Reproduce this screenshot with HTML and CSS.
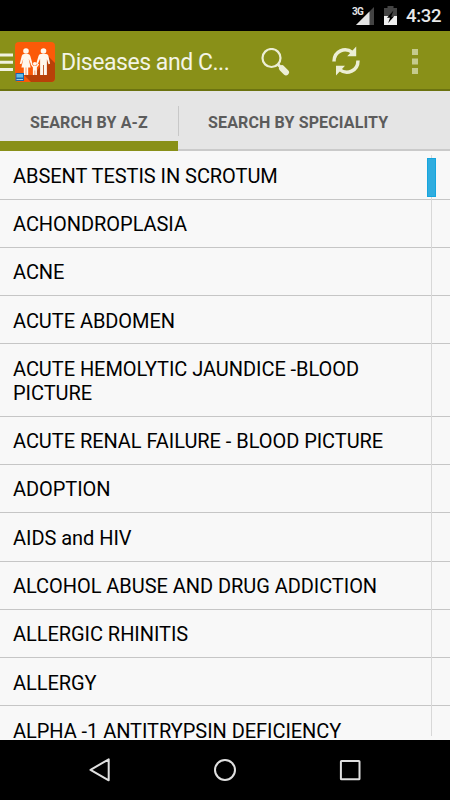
FILE: index.html
```html
<!DOCTYPE html>
<html lang="en">

<head>
    <meta charset="UTF-8">
    <meta name="viewport" content="width=device-width, initial-scale=1.0">
    <title>Diseases and Conditions</title>
    <link rel="stylesheet" href="styles.css">
</head>

<body>
    <div class="screen">
        <div class="status-bar">
            <svg class="signal" width="24" height="20" viewBox="0 0 24 20">
                <path d="M22 1v18H4z" fill="#444" />
                <path d="M17.5 5.500V19H4z" fill="#e4e4e4" />
                <text x="0" y="9" class="network">3G</text>
            </svg>
            <svg class="battery" width="13" height="20" viewBox="0 0 13 20">
                <path d="M3.5 0h6v2H13v8H0V2h3.5z" fill="#444" />
                <path d="M0 10h13v9H0z" fill="#f0f0f0" />
                <path d="M9.5 4.5 3 11.8h3L4.2 17l6-6.8H7.3z" fill="#000" />
            </svg>
            <span class="clock">4:32</span>
        </div>

        <header class="action-bar">
            <svg class="drawer" width="13" height="20" viewBox="0 0 13 20">
                <path d="M0 3h13M0 10.2h13M0 17.5h13" stroke="#f0f1df" stroke-width="3" />
            </svg>
            <svg class="logo" width="40" height="40" viewBox="0 0 40 40">
                <rect width="40" height="40" rx="4" fill="#fb5a08" />
                <path d="M9 33h10l14-19 7 7v15a4 4 0 0 1-4 4H16z" fill="#b94108" />
                <g fill="#fff8ee">
                    <circle cx="11" cy="9" r="2.800" />
                    <path d="M9 12h4q1.700 0 2.200 1.700l2.300 8-1.500.6-2.300-5.500 1.900 8.700h-2.400V33h-1.900v-7.500h-.6V33H8.800v-7.500H6.400l1.900-8.700-2 5.500-1.500-.6 2-8Q7.300 12 9 12z" />
                    <circle cx="28.500" cy="9" r="2.800" />
                    <path d="M25.800 12h5.400q1.700 0 2.200 1.700l1.700 8-1.600.5-1.600-5.200V33h-3V23h-.8v10h-3V16.800l-2.600 6-1.400-.8 2.500-8.300Q24.100 12 25.800 12z" />
                    <circle cx="19.800" cy="21.800" r="1.900" />
                    <path d="m16.500 21.500 2.200 2.400h2.300l2.200-2.200.9.900-2.200 3V33h-1.700v-4.500h-.6V33H17.900v-7.500l-2.300-3.200z" />
                </g>
                <path d="M.5 31h8.500v8H.5z" fill="#1769ae" />
                <path d="M1.500 32H8v3.500H1.500z" fill="#62bce9" />
                <path d="M1.500 37.500H8" stroke="#a6cfe9" />
            </svg>
            <h1>Diseases and C...</h1>
            <svg class="search" width="29" height="28" viewBox="0 0 29 28">
                <circle cx="10.500" cy="10" r="9" fill="none" stroke="#eceed5" stroke-width="2.200" />
                <path d="m16.500 16 3 3" stroke="#eceed5" stroke-width="3" />
                <path d="m21 20.300 4 4" stroke="#eceed5" stroke-width="6" stroke-linecap="round" />
            </svg>
            <svg class="refresh" width="28" height="30" viewBox="0 0 28 30">
                <path d="M2 15.500C2 5 13 .500 20.500 6.500M26 14.500C26 25 15 29.500 7.500 23.500" fill="none" stroke="#eceed5" stroke-width="3.500" />
                <path d="M24.200.500v9.800h-9zM4 29.500v-9.800h9z" fill="#eceed5" />
            </svg>
            <svg class="more" width="6" height="26" viewBox="0 0 6 26">
                <path d="M0 0h6v6H0zM0 9.500h6v6H0zM0 19h6v6H0z" fill="#c5ca8c" />
            </svg>
        </header>

        <nav class="tabs">
            <div class="tab active"><span>SEARCH BY A-Z</span></div>
            <div class="tab"><span>SEARCH BY SPECIALITY</span></div>
        </nav>

        <main class="list">
            <ul>
                <li>ABSENT TESTIS IN SCROTUM</li>
                <li>ACHONDROPLASIA</li>
                <li>ACNE</li>
                <li>ACUTE ABDOMEN</li>
                <li>ACUTE HEMOLYTIC JAUNDICE -BLOOD PICTURE</li>
                <li>ACUTE RENAL FAILURE - BLOOD PICTURE</li>
                <li>ADOPTION</li>
                <li>AIDS and HIV</li>
                <li>ALCOHOL ABUSE AND DRUG ADDICTION</li>
                <li>ALLERGIC RHINITIS</li>
                <li>ALLERGY</li>
                <li>ALPHA -1 ANTITRYPSIN DEFICIENCY</li>
            </ul>
            <div class="scroll-track">
                <div class="scroll-thumb"></div>
            </div>
        </main>

        <footer class="nav-bar">
            <svg width="24" height="24" viewBox="0 0 24 24">
                <path d="M20.700 1.300v21L2.500 11.800z" />
            </svg>
            <svg width="24" height="24" viewBox="0 0 24 24">
                <circle cx="12" cy="12" r="10" />
            </svg>
            <svg width="24" height="24" viewBox="0 0 24 24">
                <rect x="2.900" y="2.900" width="18.600" height="18.400" rx=".6" />
            </svg>
        </footer>
    </div>
</body>

</html>
```

FILE: styles.css
```css
body {
    margin: 0;
    font-family: Roboto, "Liberation Sans", sans-serif;
    background-color: #000;
}

.screen {
    display: flex;
    flex-direction: column;
    width: 450px;
    height: 800px;
    overflow: hidden;
}

.status-bar {
    display: flex;
    align-items: center;
    justify-content: flex-end;
    height: 31px;
    box-sizing: border-box;
    padding-right: 10px;
    background-color: #000;
    color: #e8e8e8;
}

.network {
    font-size: 10px;
    font-weight: bold;
    letter-spacing: -0.7px;
    fill: #e4e4e4;
}

.signal {
    margin-top: 1px;
    margin-right: 8px;
}

.battery {
    margin-top: 1px;
    margin-right: 9px;
}

.clock {
    width: 34px;
    font-size: 18.5px;
    font-weight: 500;
    letter-spacing: -0.3px;
    line-height: 31px;
    padding-top: 2px;
}

.action-bar {
    display: flex;
    align-items: center;
    flex: none;
    height: 60px;
    box-sizing: border-box;
    background-color: #899018;
    border-bottom: 2px solid #6c7310;
}

.action-bar svg {
    flex: none;
}

.logo {
    margin-left: 2px;
    margin-top: 3px;
}

.action-bar h1 {
    width: 170px;
    margin: 5px 0 0 6px;
    font-size: 23px;
    letter-spacing: -0.45px;
    font-weight: normal;
    white-space: nowrap;
    color: #f3f4e5;
}

.search {
    margin-left: 30px;
    margin-top: 3px;
}

.refresh {
    margin-left: 42px;
    margin-top: 2px;
}

.more {
    margin-left: 52px;
    margin-top: 4px;
}

.drawer {
    margin-top: 3px;
}

.tabs {
    display: flex;
    flex: none;
    height: 60px;
    background-color: #e5e5e5;
}

.tab {
    display: flex;
    align-items: center;
    width: 272px;
    box-sizing: border-box;
    padding-left: 30px;
    border-bottom: 2px solid #cacaca;
    font-size: 16px;
    font-weight: bold;
    letter-spacing: 0.14px;
    color: #5c5c5c;
    white-space: nowrap;
}

.tab span {
    margin-top: 4px;
}

.tab.active {
    width: 178px;
    padding-left: 30px;
    border-bottom: 10px solid #899018;
}

.tab.active span {
    margin-top: 12px;
}

.tab + .tab {
    background: linear-gradient(#c8c8c8, #c8c8c8) left 15px / 1px 30px no-repeat;
}

.list {
    display: flex;
    height: 589px;
    overflow: hidden;
    background-color: #f8f8f8;
    position: relative;
}

.list ul {
    width: 450px;
    margin: 0;
    padding: 0;
    list-style: none;
}

.list li {
    box-sizing: border-box;
    padding: 12.4px 60px 10.9px 13px;
    border-bottom: 1px solid #c6c6c6;
    font-size: 20px;
    letter-spacing: -0.05px;
    line-height: 24px;
    color: #000;
}

.list li:first-child {
    padding-top: 12.7px;
}

/* fast scroller lies over the rows */
.scroll-track {
    position: absolute;
    top: 4px;
    right: 14px;
    bottom: 4px;
    width: 9px;
    background: linear-gradient(#d8d8d8, #d8d8d8) center / 1px 100% no-repeat;
}

.scroll-thumb {
    height: 37px;
    margin-top: 3px;
    background-color: #30addf;
    border: 1px solid #16a5de;
    box-sizing: content-box;
}

.nav-bar {
    display: flex;
    flex: none;
    align-items: center;
    justify-content: center;
    gap: 101px;
    height: 60px;
    background-color: #000;
}

.nav-bar svg {
    fill: none;
    stroke: #e0e0e0;
    stroke-width: 2;
    stroke-linejoin: round;
}
```
